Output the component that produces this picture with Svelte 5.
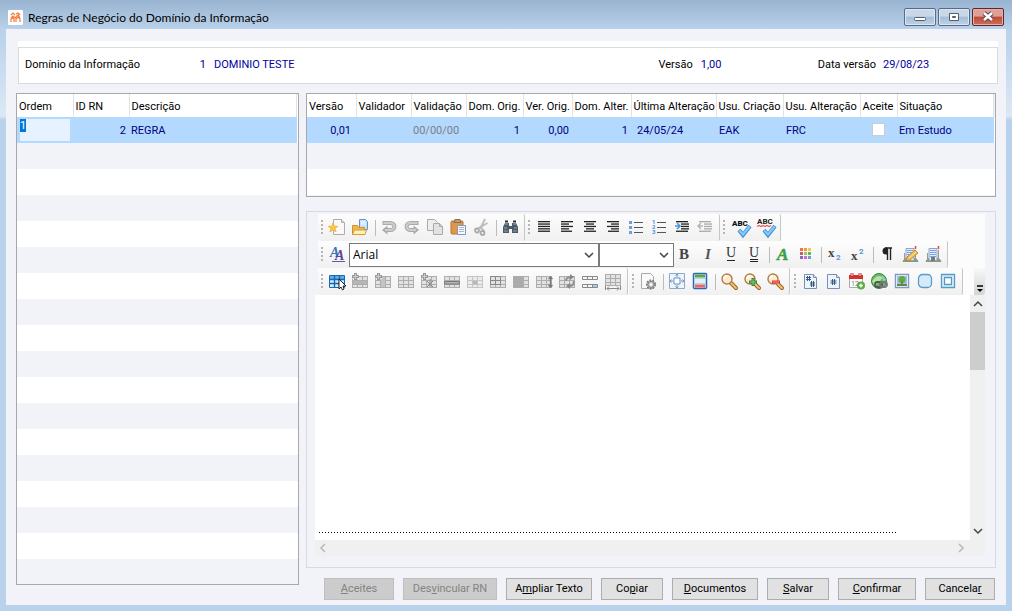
<script>
    import { onMount } from 'svelte';

    let ordemInput;
    let ordem = '1';
    let fonte = 'Arial';
    let texto = '';

    const rules = [{ id: 2, descricao: 'REGRA' }];

    const actions = [
        { before: '', key: 'A', after: 'ceites', width: 70, disabled: true },
        { before: 'Des', key: 'v', after: 'incular RN', width: 94, disabled: true },
        { before: 'A', key: 'm', after: 'pliar Texto', width: 86 },
        { before: 'Co', key: 'p', after: 'iar', width: 62 },
        { before: '', key: 'D', after: 'ocumentos', width: 86 },
        { before: '', key: 'S', after: 'alvar', width: 62 },
        { before: '', key: 'C', after: 'onfirmar', width: 78 },
        { before: 'Cancela', key: 'r', after: '', width: 70 }
    ];

    const standard = [
        ['novo', 'abrir', '|', 'desfazer', 'refazer', 'copiar', 'colar', 'recortar', '|', 'localizar'],
        ['justificar', 'esquerda', 'centro', 'direita', 'marcadores', 'numeracao', 'recuo', 'recuoMenos'],
        ['ortografia', 'autoOrtografia']
    ];
    const format = ['negrito', 'italico', 'sublinhado', 'duplo', '|', 'corFonte', 'cores', '|', 'subscrito', 'sobrescrito', '|', 'paragrafo', 'editarEstilo', 'estilo'];
    const tables = [
        ['tabela', 'inserirLinha', 'inserirColuna', 'grade', 'inserirCelula', 'linha', 'celula', 'mesclar', 'colunas', 'altura', 'girar', 'dividir', 'largura'],
        ['config', '|', 'margens', 'cabecalho', '|', 'zoom', 'zoomMais', 'zoomMenos'],
        ['paginas', 'pagina', 'data', 'link', 'imagem', 'forma', 'quadro']
    ];

    // linhas de texto dos botões de alinhamento: [x, largura]
    function lines(list, color = '#222') {
        return list.map(([x, w], i) => `<rect x="${x}" y="${2 + i * 2.4}" width="${w}" height="1.3" fill="${color}"/>`).join('');
    }

    // grade cinza 3x3 usada pelos botões de tabela
    function grid(extra = '', y = 3) {
        return `<rect x=".5" y="${y}.5" width="15" height="11" fill="#e2e2e2" stroke="#adadad"/>` +
            `<path d="M1 ${y + 4}.5h14M1 ${y + 8}.5h14M5.500 ${y + 1}v10M10.500 ${y + 1}v10" stroke="#adadad"/>` + extra;
    }

    const plus = '<path d="M3.500 0v7M0 3.500h7" stroke="#f8f8f8" stroke-width="4"/><path d="M3.500 0v7M0 3.500h7" stroke="#999" stroke-width="3"/><path d="M3.500 1v5M1 3.500h5" stroke="#ccc"/>';
    const page = '<path d="M2.500 1.500h9l3 3v11h-12z" fill="#eef4fb" stroke="#7890b0"/><path d="M11.500 1.500v3h3" fill="#dae4ef" stroke="#7890b0"/>';
    const lens = '<path d="M10 10l5 5" stroke="#9c621b" stroke-width="4" stroke-linecap="round"/><path d="M10 10l5 5" stroke="#efc27e" stroke-width="2" stroke-linecap="round"/><circle cx="6" cy="6" r="5" fill="#fdebd0" stroke="#b57c40" stroke-width="1.4"/><path d="M3 6q0-3 3-3" stroke="#fff" stroke-width="2" fill="none"/>';
    const check = '<path d="M7 11l4 5 7-9" fill="none" stroke="#3d8fd6" stroke-width="4"/><path d="M7.400 11.500l3.600 4 6.500-8" fill="none" stroke="#84caf8" stroke-width="2.200"/>';
    const building = '<path d="M1 15.500h15l-2-3H3z" fill="#65a649" stroke="#879987"/><path d="M4 2.500h8v12H4z" fill="#e8effa" stroke="#92a3bc"/><path d="M5 4.500h6M5 6.500h6M5 8.500h6M5 10.500h6" stroke="#6ea2ea"/><path d="M13.500 0v3" stroke="#df4b36" stroke-width="1.500"/><path d="M2.500 7v8M13.500 4v11" stroke="#999"/>';
    const hook = '<path d="M1.500 4h8a4 3.500 0 0 1 0 7H5" fill="none" stroke="#aaa" stroke-width="4"/><path d="M6.500 6.500v9L1 11z" fill="#aaa"/><path d="M2.500 4h7a4 3.500 0 0 1 0 7H4" fill="none" stroke="#cdcdcd" stroke-width="2"/>';

    const icons = {
        novo: '<path d="M4.500.5h8l3 3v12h-11z" fill="#f9f9f9" stroke="#adadad"/><path d="M12.500.5v3h3" fill="#ddd" stroke="#adadad"/><path d="M4 4l1.300 3.200 3.600.1-2.800 2.200 1 3.500L4 11l-3.100 2 1-3.500L-.8 7.300l3.500-.1z" fill="#fbc941" stroke="#e5a32a" stroke-width=".6"/>',
        abrir: '<path d="M7.500.5h6l2 2v8h-8z" fill="#c8e1fa" stroke="#5d96d1"/><path d="M9 3h4M9 5h5" stroke="#fff"/><path d="M.5 15.500v-9h5l1 2h6v7z" fill="#f1b94d" stroke="#d0942f"/><path d="M.5 15.500l2-4.500h12l-1.500 4.500z" fill="#fff0ba" stroke="#d49b36"/>',
        desfazer: hook,
        refazer: `<g transform="translate(16 0) scale(-1 1)">${hook}</g>`,
        copiar: '<path d="M.5.5h7l3 3v8H.5z" fill="#eee" stroke="#aaa"/><path d="M6.500 4.500h6l3 3v8h-9z" fill="#e2e2e2" stroke="#aaa"/><path d="M12.500 4.500v3h3" fill="none" stroke="#aaa"/>',
        colar: '<rect x="1" y="2" width="12" height="13" rx="1" fill="#e0974a" stroke="#b87532"/><path d="M4 3.500h7l-1-3H5z" fill="#b8a07a" stroke="#8a6e45"/><path d="M7.500 6.500h8v9h-8z" fill="#f5f9fe" stroke="#8399b2"/><path d="M9 8.500h5M9 10.500h5M9 12.500h5" stroke="#9eb8d5"/>',
        recortar: '<path d="M12 0L7 10M14.500 4L4 10M7 7l4 5" stroke="#bbb" stroke-width="1.800"/><circle cx="4" cy="11.500" r="2" fill="none" stroke="#aaa" stroke-width="1.800"/><circle cx="9.500" cy="14" r="2" fill="none" stroke="#aaa" stroke-width="1.800"/>',
        localizar: '<path d="M3 4h4v3h3V4h4l2 4v6h-6v-4H7v4H1V8z" fill="#4b5a68"/><path d="M3 5h3M11 5h3M2 9h3M12 9h3M2 12h4M11 12h4" stroke="#91a3b5" stroke-width="1.200"/><path d="M3 2.500h3M11 2.500h3" stroke="#26313c" stroke-width="2"/>',
        justificar: lines([[2, 12], [2, 12], [2, 12], [2, 12], [2, 12]]),
        esquerda: lines([[2, 12], [2, 8], [2, 12], [2, 8], [2, 11]]),
        centro: lines([[2, 12], [4, 8], [2, 12], [4, 8], [2, 12]]),
        direita: lines([[2, 12], [6, 8], [2, 12], [6, 8], [3, 11]]),
        marcadores: '<path d="M6 3.500h9M6 8.500h9M6 13.500h9" stroke="#555"/><path d="M2.500 2v13" stroke="#6f9edb" stroke-width="3" stroke-dasharray="3 2"/>',
        numeracao: '<path d="M6 3.500h9M6 8.500h9M6 13.500h9" stroke="#555"/><text x="1" y="5" font-size="6" font-weight="bold" fill="#4e8dda">1</text><text x="1" y="10" font-size="6" font-weight="bold" fill="#4e8dda">2</text><text x="1" y="15" font-size="6" font-weight="bold" fill="#4e8dda">3</text>',
        recuo: lines([[2, 12], [7, 8], [7, 8], [7, 8], [2, 12]]) + '<path d="M1 7h4M3 4l3 3-3 3" stroke="#4d94e2" stroke-width="1.500" fill="none"/>',
        recuoMenos: lines([[2, 12], [7, 8], [7, 8], [7, 8], [2, 12]], '#aaa') + '<path d="M2 7h4M4 4L1 7l3 3" stroke="#b7b7b7" stroke-width="1.500" fill="none"/>',
        ortografia: '<text x="0" y="7" font-size="8" font-weight="900" fill="#111">ABC</text>' + check,
        autoOrtografia: '<text x="0" y="5" font-size="8" font-weight="bold" fill="#222">ABC</text><path d="M0 7.500l2-1 2 1 2-1 2 1 2-1 2 1 2-1" fill="none" stroke="#ed5656" stroke-width="1.200"/>' + check,
        fonte: '<text x="1" y="11" font-size="14" font-style="italic" font-weight="bold" font-family="Liberation Serif" fill="#3a75bd">A</text><text x="6" y="14" font-size="14" font-style="italic" font-weight="bold" font-family="Liberation Serif" fill="#654095">A</text><path d="M3 15.500h13" stroke="#6a55a8"/>',
        negrito: '<text x="2" y="13" font-size="15" font-weight="bold" font-family="Liberation Serif" fill="#444">B</text>',
        italico: '<text x="5" y="13" font-size="15" font-weight="bold" font-style="italic" font-family="Liberation Serif" fill="#555">I</text>',
        sublinhado: '<text x="3" y="11" font-size="14" font-family="Liberation Serif" fill="#333">U</text><path d="M4 14.500h8" stroke="#222"/>',
        duplo: '<text x="3" y="11" font-size="14" font-family="Liberation Serif" fill="#333">U</text><path d="M4 13.500h8M4 15.500h8" stroke="#222"/>',
        corFonte: '<text x="2" y="14" font-size="17" font-weight="bold" font-style="italic" font-family="Liberation Serif" fill="#3da043" stroke="#3da043" stroke-width=".5">A</text>',
        cores: '<path d="M2 2h3v3H2z" fill="#e8744d"/><path d="M6 2h3v3H6z" fill="#f29642"/><path d="M10 2h3v3h-3z" fill="#f8c747"/><path d="M2 6h3v3H2z" fill="#cc5c70"/><path d="M6 6h3v3H6z" fill="#9bca4d"/><path d="M10 6h3v3h-3z" fill="#59b66b"/><path d="M2 10h3v3H2z" fill="#8c67bf"/><path d="M6 10h3v3H6z" fill="#d66cc6"/><path d="M10 10h3v3h-3z" fill="#6b9edd"/>',
        subscrito: '<text x="1" y="11" font-size="13" font-weight="bold" font-family="Liberation Serif" fill="#444">x</text><text x="9" y="14" font-size="8" font-weight="bold" fill="#5593d9">2</text>',
        sobrescrito: '<text x="1" y="14" font-size="13" font-weight="bold" font-family="Liberation Serif" fill="#444">x</text><text x="9" y="8" font-size="8" font-weight="bold" fill="#5593d9">2</text>',
        paragrafo: '<path d="M6 2h7M8.500 2v12M11.500 2v12" stroke="#222" stroke-width="1.400"/><path d="M8 1.500H7a3.500 3.500 0 0 0 0 7h1z" fill="#222"/>',
        editarEstilo: building + '<path d="M4 15l1-4 8-7 3 3-8 7z" fill="#f5bd4c" stroke="#b6792c" stroke-width=".8"/><path d="M7 12l7-6" stroke="#ffe5a0"/>',
        estilo: building + '<path d="M6 11h4v4H6z" fill="#777"/>',
        tabela: '<path d="M.5 2.500h15v12H.5z" fill="#d6ebfb" stroke="#1768b4"/><path d="M1 3h14v3H1z" fill="#5faee8"/><path d="M0 6.500h16M0 10.500h16M5.500 2v13M10.500 2v13" stroke="#1768b4" stroke-width="1.400"/><path d="M10 6v10l2-2 1.500 3 1.500-1-1-3h3z" fill="#fff" stroke="#111" stroke-width=".9"/>',
        inserirLinha: grid('<path d="M1 8h14v3H1z" fill="#b5b5b5"/>' + plus),
        inserirColuna: grid('<path d="M6 4h4v10H6z" fill="#c4c4c4"/>' + plus),
        grade: grid(),
        inserirCelula: grid('<path d="M6 8l3 3 3-3M9 6v8M6 14l3-3 3 3" stroke="#888" fill="none"/>' + plus),
        linha: grid('<path d="M.5 8.500h15v2.500H.5z" fill="#b5b5b5" stroke="#777"/>'),
        celula: grid('<path d="M6 8h4v3H6z" fill="#999"/><path d="M0 3h16v12H0z" fill="#fff" opacity=".3"/>'),
        mesclar: grid('<path d="M.5 3.500h10v8H.5zM5.500 3.500v8M.5 7.500h10" fill="none" stroke="#888"/>'),
        colunas: grid('<path d="M1 4h4v3H1zM1 8h4v3H1zM1 12h4v2H1zM6 4h4v3H6zM6 8h4v3H6zM6 12h4v2H6z" fill="#aaa"/>'),
        altura: grid('<path d="M14.500 4v10M12.500 6l2-2 2 2M12.500 12l2 2 2-2" stroke="#777" fill="none" stroke-width="1.300"/>'),
        girar: grid('<path d="M7 8q0-4 5-4M15 8q0 5-5 5" stroke="#929292" fill="none" stroke-width="2"/><path d="M11 1l4 3-4 3zM11 10l-4 3 4 3z" fill="#888"/>'),
        dividir: '<path d="M.5 3.500h15v3H.5zM.5 11.500h15v3H.5zM5.500 3.500v3M10.500 3.500v3M5.500 11.500v3M10.500 11.500v3" fill="#f5f5f5" stroke="#888"/><path d="M11 12h4v2h-4z" fill="#a8cdf2"/>',
        largura: grid('<path d="M.5 13v4M15.500 13v4M2 15.500h12M4 13.500l-2 2 2 2M12 13.500l2 2-2 2" stroke="#888" fill="none"/>', 1),
        config: '<path d="M1.500.5h9l3 3v12h-12z" fill="#fafafa" stroke="#aaa"/><circle cx="11" cy="11.500" r="4" fill="#e0e0e0" stroke="#777" stroke-width="2" stroke-dasharray="1.800 1"/><circle cx="11" cy="11.500" r="3" fill="#ccc" stroke="#888"/><circle cx="11" cy="11.500" r="1.200" fill="#fff"/>',
        margens: '<path d="M.5.5h15v15H.5z" fill="#edf4fc" stroke="#91a8c6"/><path d="M5 5h6v6H5z" fill="#fff" stroke="#648bbd"/><path d="M8 1v3M8 12v3M1 8h3M12 8h3M6.500 2.500L8 1l1.500 1.500M6.500 13.500L8 15l1.500-1.500M2.500 6.500L1 8l1.500 1.500M13.500 6.500L15 8l-1.500 1.500" fill="none" stroke="#6c98cc"/>',
        cabecalho: '<rect x="1.500" y=".5" width="13" height="15" rx="1" fill="#e5f1fd" stroke="#2b69b4" stroke-width="1.500"/><path d="M3 3h10" stroke="#57a940" stroke-width="3"/><path d="M3 13h10" stroke="#e66767" stroke-width="3"/><path d="M2 5.500h12M2 10.500h12" stroke="#b4d0ee"/>',
        zoom: lens,
        zoomMais: lens + '<path d="M9 5v8M5 9h8" stroke="#36853d" stroke-width="3"/><path d="M9 6v6M6 9h6" stroke="#7bd07c"/>',
        zoomMenos: lens + '<path d="M5 9h8" stroke="#df3333" stroke-width="3"/><path d="M6 9h6" stroke="#ff9191"/>',
        paginas: page + '<path d="M5.500 3v5M7.500 3v5M4 4.500h5M4 6.500h5M9.500 8v6M11.500 8v6M8 10h5M8 12h5" stroke="#345a8b"/>',
        pagina: page + '<path d="M7.500 6v6M9.500 6v6M5.500 8h6M5.500 10h6" stroke="#345a8b"/>',
        data: '<path d="M1.500 2.500h13v12h-13z" fill="#fff" stroke="#aaa"/><path d="M1 2h14v4H1z" fill="#dd2c2b"/><path d="M4 0v4M12 0v4" stroke="#b33" stroke-width="3"/><path d="M4 0v3M12 0v3" stroke="#eee"/><text x="3" y="13" font-size="7" fill="#777">12</text><circle cx="13" cy="12.500" r="4" fill="#5bad3d"/><path d="M13 10.500v4M11 12.500h4" stroke="#fff" stroke-width="1.300"/>',
        link: '<circle cx="8" cy="8" r="7.500" fill="#68b865" stroke="#39883d"/><path d="M1 8q3-4 6-5l5 1-3 4-5 5z" fill="#b4e3a2"/><path d="M11 2l4 5-3 1z" fill="#8fd5c3"/><rect x="4" y="9" width="7" height="5" rx="2.500" fill="none" stroke="#555" stroke-width="1.800"/><rect x="9" y="9" width="7" height="5" rx="2.500" fill="none" stroke="#777" stroke-width="1.800"/>',
        imagem: '<path d="M1.500 1.500h13v13h-13z" fill="#fff" stroke="#8098c2" stroke-width="1.400"/><path d="M3 3h10v10H3z" fill="#9fc0ec"/><path d="M3 11h10v2H3z" fill="#539044"/><circle cx="8" cy="6.500" r="3.500" fill="#61aa3f"/><path d="M8 8v4" stroke="#8a6a3c" stroke-width="1.500"/>',
        forma: '<rect x="1.500" y="1.500" width="13" height="13" rx="4" fill="#d6ebfa" stroke="#5b9bca" stroke-width="1.300"/>',
        quadro: '<path d="M1.500 1.500h13v13h-13z" fill="#dff0fa" stroke="#549bc4" stroke-width="1.300"/><path d="M4.500 4.500h7v7h-7z" fill="#fff" stroke="#549bc4" stroke-width="1.300"/>'
    };

    const disabledIcons = ['desfazer', 'refazer', 'copiar', 'recortar', 'recuoMenos', ...tables[0].slice(1)];

    onMount(() => {
        ordemInput.focus();
        ordemInput.select();
    });
</script>

{#snippet tool(name)}
    {#if name === '|'}
        <span class="sep"></span>
    {:else}
        <button class="tool" class:wide={name.toLowerCase().includes('ortografia')} aria-label={name} disabled={disabledIcons.includes(name)}>
            <svg viewBox="0 0 17 17">{@html icons[name]}</svg>
        </button>
    {/if}
{/snippet}

{#snippet group(names)}
    <div class="group">
        <span class="grip"></span>
        {#each names as name}{@render tool(name)}{/each}
    </div>
{/snippet}

{#snippet chevron(d)}
    <svg class="chevron" viewBox="0 0 10 10"><path {d} fill="none" stroke="currentColor" stroke-width="1.5" /></svg>
{/snippet}

<div class="window">
    <header class="titlebar">
        <svg class="logo" viewBox="0 0 15 15">
            <rect width="15" height="15" rx="1" fill="#fff" />
            <path d="M3 5l2-2 2 2M8 4l2-1 2 2M3 8l2-2 2 2 3-3 2 3M3 12V9l2-1 1 1v3M8 12V9l2-2 2 2v3" fill="none" stroke="#f47b38" stroke-width="1.2" />
        </svg>
        <h1>Regras de Negócio do Domínio da Informação</h1>
        <div class="controls">
            <button aria-label="Minimizar"><svg viewBox="0 0 14 12"><rect x="1.500" y="6.500" width="11" height="3" rx="1" fill="#fff" stroke="#555d69" /></svg></button>
            <button aria-label="Maximizar"><svg viewBox="0 0 14 12"><path d="M2.500 2.500h9v7h-9z" fill="#fff" stroke="#555d69" /><path d="M5.500 5.500h3v1h-3z" fill="#9eb5d0" stroke="#555d69" /></svg></button>
            <button class="close" aria-label="Fechar"><svg viewBox="0 0 14 12"><path d="M3 2l8 7M11 2l-8 7" stroke="#554453" stroke-width="4.500" /><path d="M3 2l8 7M11 2l-8 7" stroke="#fff" stroke-width="2.600" /></svg></button>
        </div>
    </header>

    <main>
        <section class="info">
            <div class="info-box">
                <span class="domain">Domínio da Informação</span>
                <span class="value number">1</span>
                <span class="value name">DOMINIO TESTE</span>
                <span>Versão</span>
                <span class="value version">1,00</span>
                <span>Data versão</span>
                <span class="value date">29/08/23</span>
            </div>
        </section>

        <div class="columns">
            <section class="list rules">
                <table>
                    <colgroup><col class="c56" /><col class="c56" /><col /></colgroup>
                    <thead><tr><th>Ordem</th><th>ID RN</th><th>Descrição</th></tr></thead>
                    <tbody>
                        {#each rules as rule}
                            <tr>
                                <td class="field"><input class="ordem" aria-label="Ordem" bind:this={ordemInput} bind:value={ordem} /></td>
                                <td class="right">{rule.id}</td>
                                <td>{rule.descricao}</td>
                            </tr>
                        {/each}
                    </tbody>
                </table>
            </section>

            <div class="detail">
                <section class="list versions">
                    <table>
                        <colgroup>
                            <col class="c49" /><col class="c55" /><col class="c55" /><col class="c57" /><col class="c49" /><col class="c59" />
                            <col class="c85" /><col class="c67" /><col class="c77" /><col class="c37" /><col />
                        </colgroup>
                        <thead>
                            <tr>
                                <th>Versão</th><th>Validador</th><th>Validação</th><th>Dom. Orig.</th><th>Ver. Orig.</th><th>Dom. Alter.</th>
                                <th>Última Alteração</th><th>Usu. Criação</th><th>Usu. Alteração</th><th>Aceite</th><th>Situação</th>
                            </tr>
                        </thead>
                        <tbody>
                            <tr>
                                <td class="right wider">0,01</td>
                                <td></td>
                                <td class="muted">00/00/00</td>
                                <td class="right">1</td>
                                <td class="right">0,00</td>
                                <td class="right">1</td>
                                <td class="indent">24/05/24</td>
                                <td class="spaced">EAK</td>
                                <td class="spaced">FRC</td>
                                <td class="center"><input type="checkbox" aria-label="Aceite" /></td>
                                <td>Em Estudo</td>
                            </tr>
                        </tbody>
                    </table>
                </section>

                <section class="editor">
                    <div class="toolbars">
                        <div class="bar">
                            {#each standard as names}{@render group(names)}{/each}
                        </div>
                        <div class="bar">
                            <div class="group">
                                <span class="grip"></span>
                                {@render tool('fonte')}
                                <label class="combo font">
                                    <select aria-label="Fonte" bind:value={fonte}><option>Arial</option></select>
                                    {@render chevron('M1 3l4 4 4-4')}
                                </label>
                                <label class="combo size">
                                    <select aria-label="Tamanho"><option></option></select>
                                    {@render chevron('M1 3l4 4 4-4')}
                                </label>
                                {#each format as name}{@render tool(name)}{/each}
                            </div>
                        </div>
                        <div class="bar gapped">
                            {#each tables as names}{@render group(names)}{/each}
                            <button class="more" aria-label="Mais botões"><svg viewBox="0 0 8 8"><path d="M1 1h6" stroke="#000" stroke-width="1.500" /><path d="M1 4h6L4 7z" /></svg></button>
                        </div>
                    </div>
                    <div class="paper">
                        <div class="page">
                            <textarea aria-label="Texto da regra" bind:value={texto}></textarea>
                            <div class="break"></div>
                        </div>
                        <div class="vscroll">
                            {@render chevron('M1 7l4-4 4 4')}
                            <span class="thumb"></span>
                            {@render chevron('M1 3l4 4 4-4')}
                        </div>
                    </div>
                    <div class="hscroll">
                        {@render chevron('M7 1L3 5l4 4')}
                        {@render chevron('M3 1l4 4-4 4')}
                    </div>
                </section>

                <footer>
                    {#each actions as a}
                        <button style:width="{a.width}px" disabled={a.disabled}>{a.before}<u>{a.key}</u>{a.after}</button>
                    {/each}
                </footer>
            </div>
        </div>
    </main>
</div>

<style>
    :global(body) { margin: 0; }

    .window, .window * { box-sizing: border-box; }

    .window {
        display: flex;
        flex-direction: column;
        min-height: 100vh;
        padding: 0 6px 6px;
        background: linear-gradient(#99b4d1 0, #b9d1ea 29px, #dce8f5 116px, #b9d1ea 120px);
        font: 11px/14px Roboto, "Liberation Sans", sans-serif;
        color: #000;
    }

    button, input, select, textarea { font: inherit; }

    .titlebar {
        display: flex;
        align-items: center;
        height: 29px;
        padding: 5px 2px 0;
    }

    .logo { width: 15px; height: 15px; }

    h1 {
        flex: 1;
        margin: 2px 0 0 5px;
        font: 12px/16px Lato, "Open Sans", sans-serif;
    }

    .controls { display: flex; gap: 2px; }

    .controls button {
        display: flex;
        align-items: center;
        justify-content: center;
        width: 32px;
        height: 18px;
        padding: 0;
        border: 1px solid #596b82;
        border-radius: 2px;
        background: linear-gradient(#c9d8e9 45%, #a5bdd8 50%, #bdd2e9);
        box-shadow: inset 0 0 0 1px #dce7f4;
    }

    .controls svg { width: 14px; height: 12px; }

    .controls .close {
        border-color: #5b2730;
        background: linear-gradient(#e0a096 45%, #bd4b38 50%, #cf6e59);
        box-shadow: inset 0 0 0 1px #e3b0a5;
    }

    main {
        flex: 1;
        display: flex;
        flex-direction: column;
        padding: 12px 10px 5px;
        background: #f2f3f9;
    }

    .info {
        margin: 0 -2px 9px 2px;
        padding-top: 6px;
        background: #fff;
    }

    .info-box {
        display: flex;
        align-items: center;
        height: 37px;
        padding: 0 6px 2px;
        border: 1px solid #d9dadd;
    }

    .value { color: #0000a0; }
    .domain { width: 170px; }
    .number { width: 11px; text-align: right; color: #000080; }
    .name { flex: 1; margin-left: 8px; }
    .version { width: 117px; margin-left: 8px; }
    .date { width: 108px; margin-left: 7px; }

    .columns {
        flex: 1;
        display: grid;
        grid-template-columns: minmax(0, 283fr) minmax(0, 690fr);
        gap: 7px;
    }

    .list {
        border: 1px solid #a6a8ae;
        background: repeating-linear-gradient(#fff 0 26px, #f2f3f9 26px 52px) 0 23px;
        overflow: hidden;
    }

    .rules { margin-bottom: 15px; padding-right: 1px; }

    .detail {
        display: flex;
        flex-direction: column;
    }

    .versions { height: 104px; padding-right: 1px; }

    table {
        width: 100%;
        table-layout: fixed;
        border-collapse: collapse;
        white-space: nowrap;
    }

    th {
        height: 23px;
        padding: 2px 0 0 2px;
        border-right: 1px solid #e3e3e3;
        background: #fff;
        font-weight: normal;
        text-align: left;
    }

    td {
        height: 26px;
        padding: 2px 0 0 2px;
        background: #b3d9ff;
        color: #000080;
    }

    td.field { padding: 0 0 0 3px; }
    td.right { padding-right: 3px; text-align: right; }
    td.wider { padding-right: 5px; }
    td.indent { padding-left: 6px; }
    td.spaced { padding-left: 3px; }
    td.center { padding: 0; }
    td.muted { color: #7a7f8a; }

    .c37 { width: 37px; }
    .c49 { width: 49px; }
    .c55 { width: 55px; }
    .c56 { width: 56px; }
    .c57 { width: 57px; }
    .c59 { width: 59px; }
    .c67 { width: 67px; }
    .c77 { width: 77px; }
    .c85 { width: 85px; }

    .ordem {
        display: block;
        width: 50px;
        height: 22px;
        padding: 0 0 9px;
        border: 0;
        outline: 0;
        background: #e6f2ff;
        caret-color: #ff7f27;
    }

    .ordem::selection { background: #0078d7; color: #fff; }

    input[type="checkbox"] {
        appearance: none;
        display: block;
        width: 13px;
        height: 13px;
        margin: 0 auto 2px;
        border: 1px solid #ccc;
        background: #fff;
    }

    .editor {
        flex: 1;
        display: flex;
        flex-direction: column;
        margin: 14px 0 10px;
        padding: 2px 10px 11px 8px;
        border: 1px solid #d9dadd;
    }

    .toolbars { padding-left: 3px; background: linear-gradient(90deg, #f2f3f9 3px, #fcfcfc 3px); }

    .bar { display: flex; height: 27px; }
    .bar.gapped { gap: 1px; }

    .group {
        display: flex;
        align-items: center;
        padding-right: 2px;
        border-right: 1px solid #c6c6c6;
        border-radius: 2px;
        background: linear-gradient(#fdfdfd, #f0f0f0);
    }

    .grip {
        width: 2px;
        height: 15px;
        margin: 0 3px;
        background: repeating-linear-gradient(#b5b5b5 0 2px, transparent 2px 4px);
    }

    .tool {
        display: flex;
        align-items: center;
        justify-content: center;
        width: 23px;
        height: 24px;
        padding: 0;
        border: 0;
        background: none;
    }

    .tool svg { width: 17px; height: 17px; overflow: visible; }
    .tool.wide { width: 25px; }

    .sep {
        width: 1px;
        height: 16px;
        margin: 0 2px 0 3px;
        background: #bcbcbc;
    }

    .combo {
        display: flex;
        align-items: center;
        height: 24px;
        border: 1px solid #7a7a7a;
        background: #fff;
    }

    .combo select {
        flex: 1;
        min-width: 0;
        padding: 0 3px;
        border: 0;
        outline: 0;
        appearance: none;
        background: none;
        font: 12px/16px "Open Sans", "Noto Sans", sans-serif;
    }

    .combo .chevron { margin-right: 4px; }
    .font { width: 250px; }
    .size { width: 75px; }

    .chevron { width: 10px; height: 10px; color: #444; }

    .more {
        align-self: stretch;
        display: flex;
        align-items: flex-end;
        justify-content: center;
        width: 11px;
        margin-left: auto;
        padding: 0 0 2px;
        border: 0;
        border-radius: 0 0 3px 0;
        background: linear-gradient(#f8f8f8, #d4d4d4);
    }

    .more svg { width: 8px; height: 8px; }

    .paper {
        flex: 1;
        display: flex;
    }

    .page {
        flex: 1;
        display: flex;
        flex-direction: column;
        padding: 4px 4px 7px;
        background: #fff;
    }

    textarea {
        flex: 1;
        border: 0;
        padding: 0;
        outline: 0;
        resize: none;
        background: #fff;
    }

    .break {
        height: 1px;
        margin-right: 69px;
        background: repeating-linear-gradient(90deg, #000 0 1px, transparent 1px 3px);
    }

    .vscroll {
        display: flex;
        flex-direction: column;
        align-items: center;
        width: 15px;
        padding: 4px 0;
        background: #f0f0f0;
    }

    .thumb {
        width: 15px;
        height: 58px;
        margin: 3px 0 auto;
        background: #cdcdcd;
    }

    .hscroll {
        display: flex;
        align-items: center;
        justify-content: space-between;
        height: 16px;
        padding: 0 19px 0 3px;
        background: #f0f0f0;
    }

    .hscroll .chevron { color: #b8b8b8; }

    footer {
        display: flex;
        justify-content: flex-end;
        gap: 9px;
        padding-right: 1px;
    }

    footer button {
        height: 22px;
        padding: 0;
        border: 1px solid #adadad;
        background: #e1e1e1;
        color: #000;
        white-space: nowrap;
    }

    footer button:disabled {
        border-color: #bfbfbf;
        background: #ccc;
        color: #838383;
    }
</style>
